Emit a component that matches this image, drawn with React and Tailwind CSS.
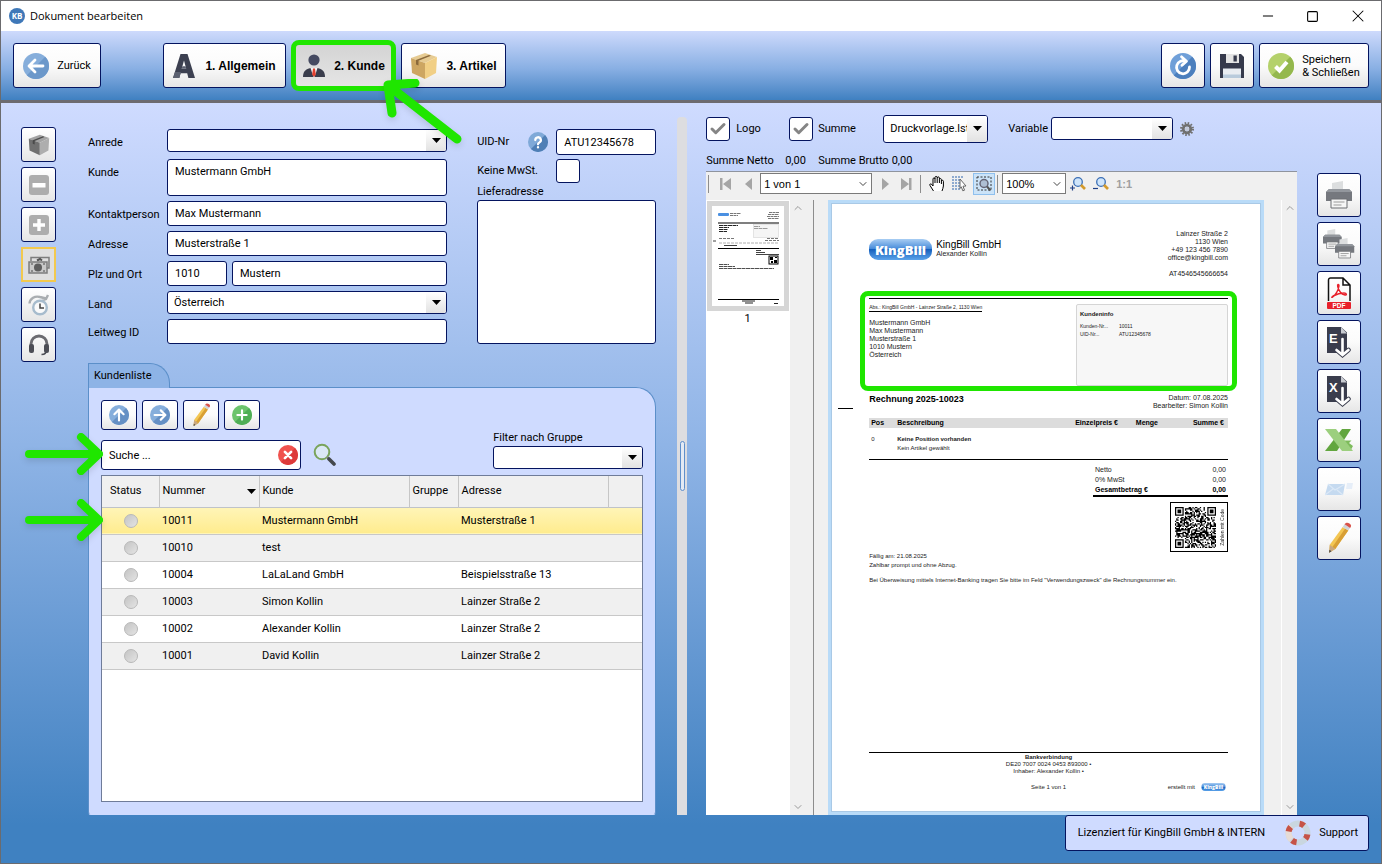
import { useState } from "react";
import { Check, ChevronDown, ChevronUp, Minus, Square, X } from "lucide-react";
import clsx from "clsx";

const customers = [
  { nummer: "10011", kunde: "Mustermann GmbH", gruppe: "", adresse: "Musterstraße 1" },
  { nummer: "10010", kunde: "test", gruppe: "", adresse: "" },
  { nummer: "10004", kunde: "LaLaLand GmbH", gruppe: "", adresse: "Beispielsstraße 13" },
  { nummer: "10003", kunde: "Simon Kollin", gruppe: "", adresse: "Lainzer Straße 2" },
  { nummer: "10002", kunde: "Alexander Kollin", gruppe: "", adresse: "Lainzer Straße 2" },
  { nummer: "10001", kunde: "David Kollin", gruppe: "", adresse: "Lainzer Straße 2" },
];

const box = "w-full min-w-0 rounded-[3px] border border-[#04145f] bg-white text-black outline-none";
const field = `${box} px-[7px]`;
const button =
  "flex items-center justify-center rounded-[3px] border border-[#04145f] bg-linear-to-b from-white via-[#fbfbfb] to-[#e6e6e6] cursor-pointer";

/* ---------- icons ---------- */

const RoundIcon = ({ size, from, to, children }) => (
  <svg width={size} height={size} viewBox="0 0 26 26" fill="none" aria-hidden="true">
    <circle cx="13" cy="13" r="13" fill={from} />
    <path d="M22.2 3.8A13 13 0 0 1 3.8 22.2z" fill={to} />
    <g stroke="#fff" strokeWidth="2.8" strokeLinecap="round" strokeLinejoin="round">
      {children}
    </g>
  </svg>
);

const BackIcon = () => (
  <RoundIcon size={26} from="#86aedb" to="#6c98ca">
    <path d="M20 13H6.5M12 7l-6 6 6 6" />
  </RoundIcon>
);

const UpIcon = () => (
  <RoundIcon size={20} from="#86aedb" to="#6590c4">
    <path d="M13 20V6.500M7 12l6-6 6 6" />
  </RoundIcon>
);

const RightIcon = () => (
  <RoundIcon size={20} from="#86aedb" to="#6590c4">
    <path d="M6 13h13.500M14 7l6 6-6 6" />
  </RoundIcon>
);

const AddIcon = () => (
  <RoundIcon size={20} from="#6cc46c" to="#4fae55">
    <path d="M13 7v12M7 13h12" />
  </RoundIcon>
);

const ClearIcon = () => (
  <RoundIcon size={20} from="#f0524e" to="#dd3a3a">
    <path d="M9 9l8 8M17 9l-8 8" strokeWidth="3.500" />
  </RoundIcon>
);

const ReloadIcon = () => (
  <RoundIcon size={26} from="#6f9fd8" to="#4c7fbd">
    <path d="M16 8.500A6.500 6.500 0 1 0 19.500 14M11.500 3.800l5 4.400-4.500 4" />
  </RoundIcon>
);

const OkIcon = () => (
  <RoundIcon size={26} from="#b4d16b" to="#94b84d">
    <path d="M7.500 13.500l4 4 7.500-8.500" strokeWidth="4" strokeLinecap="butt" strokeLinejoin="miter" />
  </RoundIcon>
);

const HelpIcon = () => (
  <RoundIcon size={20} from="#7fa9d8" to="#4f7fb6">
    <path d="M9.500 10.500a3.600 3.600 0 1 1 5.200 3.200c-1.300.7-1.700 1.200-1.700 2.300M13 19.800v.2" strokeWidth="3" />
  </RoundIcon>
);

const LetterIcon = () => (
  <svg width="22" height="24" viewBox="0 0 22 24" aria-hidden="true">
    <path d="M7.500 0h7L22 24h-6.600l-1.200-4.800H7.600L6.300 24H0zM11 6.500L8.700 14.800h4.500z" fill="#3c4050" fillRule="evenodd" />
    <path d="M0 24l2-6h5.900l-.3 1.200L6.300 24zM8.700 14.800l.7-2.600h3.200l.6 2.600z" fill="#5b6070" />
  </svg>
);

const PersonIcon = () => (
  <svg width="24" height="24" viewBox="0 0 24 24" aria-hidden="true">
    <circle cx="12" cy="6" r="5.600" fill="#454a61" />
    <path d="M1 23c0-6 3-8 7.500-9h7c4.500 1 7.500 3 7.500 9z" fill="#3a3d4c" />
    <path d="M8.500 14h7L12.500 23h-1z" fill="#f3f3f3" />
    <path d="M11 14.500h2l.8 6-1.800 2.500-1.800-2.500z" fill="#e2402f" />
  </svg>
);

const BoxIcon = ({ gray, size }) => (
  <svg width={size} height={size} viewBox="0 0 28 28" aria-hidden="true">
    <path d="M1 6l14-5 12 4-12 6z" fill={gray ? "#a3a3a3" : "#e6cb93"} />
    <path d="M1 6l14 5v16L2 21z" fill={gray ? "#707070" : "#cda662"} />
    <path d="M15 11l12-6-1 16-11 6z" fill={gray ? "#aeaeae" : "#f1cf85"} />
    <path d="M6 8l13-5 2 .7L8.500 8.800v4.700L6 12.500z" fill={gray ? "#4a4a4a" : "#8b6a3c"} />
  </svg>
);

const DiskIcon = () => (
  <svg width="24" height="24" viewBox="0 0 24 24" aria-hidden="true">
    <path d="M0 0h21l3 3v21H0z" fill="#363a4c" />
    <path d="M6 0h13v9H6z" fill="#e4e4e4" />
    <path d="M13.500 1.500h3.300v6h-3.300z" fill="#363a4c" />
    <path d="M3 14.500h18V24H3z" fill="#e9edf2" />
    <path d="M3 20.500h18V24H3z" fill="#b9cbdc" />
  </svg>
);

const SignIcon = ({ plus }) => (
  <svg width="20" height="20" viewBox="0 0 20 20" aria-hidden="true">
    <rect width="20" height="20" rx="3" fill="#adadad" />
    <path d={plus ? "M8.300 4h3.400v4.300H16v3.400h-4.300V16H8.300v-4.300H4V8.300h4.300z" : "M3.500 8h13v4.500h-13z"} fill="#fff" />
  </svg>
);

const MoneyIcon = () => (
  <svg width="22" height="18" viewBox="0 0 22 18" fill="none" aria-hidden="true">
    <path d="M3 5V1.500h18V12h-2" stroke="#7d7d7d" strokeWidth="1.500" />
    <path d="M9 4.500l3-1.500 2 1.500" stroke="#555" strokeWidth="2" />
    <rect x="1" y="6" width="18" height="11" fill="#c9c9c9" stroke="#7d7d7d" strokeWidth="1.500" />
    <circle cx="10" cy="11.500" r="4" fill="#5e5e5e" />
    <path d="M3 8h2M3 15h2M15 8h2M15 15h2" stroke="#777" strokeWidth="1.500" />
  </svg>
);

const ClockIcon = () => (
  <svg width="22" height="22" viewBox="0 0 22 22" fill="none" aria-hidden="true">
    <path d="M1.500 9.500C2 4.500 7 1.500 12 3l6 1.500M20 1l-2 4-4 1.500" stroke="#a9adb0" strokeWidth="2.400" />
    <circle cx="12" cy="13.500" r="6.800" fill="#fafafa" stroke="#a7bccd" strokeWidth="2.400" />
    <path d="M12 9.500V14h4" stroke="#444" strokeWidth="1.500" />
  </svg>
);

const HeadsetIcon = () => (
  <svg width="22" height="22" viewBox="0 0 22 22" fill="none" aria-hidden="true">
    <path d="M3 13V10a8 8 0 0 1 16 0v3" stroke="#6b6b70" strokeWidth="2.800" />
    <path d="M18.500 16c0 3-2 4.500-5 4.500" stroke="#4c4d55" strokeWidth="1.500" />
    <rect x="1" y="10" width="5" height="9" rx="2" fill="#4c4d55" />
    <rect x="16" y="10" width="5" height="9" rx="2" fill="#4c4d55" />
  </svg>
);

const PencilIcon = ({ size }) => (
  <svg width={size} height={size} viewBox="0 0 26 26" aria-hidden="true">
    <path d="M5 25l.5-6.500L16 4l4.500 3L10 22z" fill="#f3c653" />
    <path d="M7.500 20.500L18 5.300 20.500 7 10 22z" fill="#d89f35" />
    <path d="M16 4l1.500-2.200L22 4.800 20.500 7z" fill="#cfd3d8" />
    <path d="M17.500 1.800C18.500.4 20 .2 21.500 1.200s1.800 2.300.5 3.600z" fill="#d9534a" />
    <path d="M5 25l.5-6.500L10 22z" fill="#c9a77f" />
    <path d="M5 25l.2-2.500 1.700 1.200z" fill="#444" />
  </svg>
);

const SearchIcon = () => (
  <svg width="23" height="24" viewBox="0 0 23 24" fill="none" aria-hidden="true">
    <circle cx="9" cy="9" r="7.300" fill="#dbe8f6" stroke="#7aa45c" strokeWidth="2" />
    <path d="M14 14l2 2" stroke="#888" strokeWidth="2" />
    <path d="M16 16l5 5" stroke="#44484d" strokeWidth="3.600" strokeLinecap="round" />
  </svg>
);

const GearIcon = () => (
  <svg width="14" height="14" viewBox="0 0 14 14" fill="none" aria-hidden="true">
    <circle cx="7" cy="7" r="6" stroke="#70706f" strokeWidth="2" strokeDasharray="1.570 1.570" />
    <circle cx="7" cy="7" r="3.800" stroke="#70706f" strokeWidth="2.800" />
    <circle cx="7" cy="7" r="2" fill="#c3c9d6" />
  </svg>
);

const PrinterShape = () => (
  <>
    <path d="M6 9V2l11-2v9z" fill="#dcdedf" />
    <path d="M3 8h20l3 3v9H0v-9z" fill="#75787e" />
    <path d="M3 8h20l3 3H0z" fill="#93979d" />
    <path d="M5 18h16v9H5z" fill="#f6f6f6" stroke="#6c6e72" />
    <path d="M7.500 21h11M7.500 24h8" stroke="#9a9a9a" strokeWidth="1.200" />
  </>
);

const PrinterIcon = () => (
  <svg width="26" height="28" viewBox="0 0 26 28" aria-hidden="true">
    <PrinterShape />
  </svg>
);

const PrintersIcon = () => (
  <svg width="32" height="30" viewBox="0 0 32 30" aria-hidden="true">
    <g transform="scale(.72)">
      <PrinterShape />
    </g>
    <g transform="translate(12 9) scale(.74)">
      <PrinterShape />
    </g>
  </svg>
);

const PdfIcon = () => (
  <svg width="24" height="32" viewBox="0 0 24 32" fill="none" aria-hidden="true">
    <path d="M1.500 24V3A2 2 0 0 1 3.500 1H16l7 7v16M16 1v7h7" stroke="#111" strokeWidth="1.500" />
    <path d="M5.500 20c3-1.500 6-7 6.500-11 0-2.500-2-2-1.300.5C11.500 13 14 17 18 18c2 .3 2-2-1-2-4 0-8 1.500-11 3-1.800 1-1.300 2-.5 1z" stroke="#e8202a" strokeWidth="1.400" />
    <rect y="25" width="24" height="7" rx="1" fill="#e8202a" />
    <text x="12" y="31" textAnchor="middle" fontSize="6.500" fontWeight="700" fontFamily="Liberation Sans, sans-serif" fill="#fff">PDF</text>
  </svg>
);

const ExportIcon = ({ letter }) => (
  <svg width="24" height="32" viewBox="0 0 24 32" fill="none" aria-hidden="true">
    <path d="M0 1h14l6 5.500V27H0z" fill="#3a3d4d" />
    <path d="M14 1l6 6.500h-6z" fill="#c9ccd2" />
    <text x="2" y="17" fontSize="13" fontWeight="700" fontFamily="Liberation Sans, sans-serif" fill="#fff">{letter}</text>
    <path d="M15.500 13v15M9.500 24l6 5 6-5" stroke="#3a3d4d" strokeWidth="4.500" strokeLinecap="round" />
    <path d="M15.500 13v15M9.500 24l6 5 6-5" stroke="#fff" strokeWidth="2.600" strokeLinecap="round" />
  </svg>
);

const ExcelIcon = () => (
  <svg width="29" height="22" viewBox="0 0 29 22" aria-hidden="true">
    <path d="M17 0h9L12 22H0z" fill="#62a63f" />
    <path d="M19.500 11.500h7l-2.500 2.500 4 3-2 3.500-6-2z" fill="#7dbb5b" />
    <path d="M0 0h11l17 22H17z" fill="#9ccf7e" />
  </svg>
);

const MailIcon = () => (
  <svg width="29" height="14" viewBox="0 0 29 14" fill="none" aria-hidden="true">
    <path d="M3 2h17l-2 11H0z" fill="#c5daf0" />
    <path d="M3 2l7 6 10-6M0 13l8-6M18 13l-6-5" stroke="#dbe8f6" strokeWidth="1.200" />
    <path d="M22 1h6l-1 6h-6z" fill="#e6eef8" />
  </svg>
);

const LifebuoyIcon = () => (
  <svg width="26" height="26" viewBox="0 0 26 26" fill="none" aria-hidden="true">
    <circle cx="13" cy="13" r="9.500" stroke="#c9d6df" strokeWidth="6" />
    <path d="M6.300 6.300a9.500 9.500 0 0 0 0 13.400" stroke="#e6dcd6" strokeWidth="6" />
    <circle cx="13" cy="13" r="9.500" stroke="#c65347" strokeWidth="6" strokeDasharray="5 9.920" transform="rotate(8 13 13)" />
  </svg>
);

const KingBillLogo = ({ className }) => (
  <svg viewBox="0 0 63 21" className={className} role="img" aria-label="KingBill">
    <defs>
      <linearGradient id="kb" x1="0" y1="0" x2="0" y2="1">
        <stop offset="0" stopColor="#a8cdf3" />
        <stop offset="0.45" stopColor="#4b8edb" />
        <stop offset="0.5" stopColor="#1560bd" />
        <stop offset="1" stopColor="#5ba3ea" />
      </linearGradient>
    </defs>
    <rect width="63" height="21" rx="9" fill="url(#kb)" />
    <text x="31.500" y="15.500" textAnchor="middle" fontSize="13" fontWeight="800" fontFamily="Open Sans, sans-serif" fill="#fff">KingBill</text>
  </svg>
);

/* ---------- form parts ---------- */

const Caret = () => (
  <svg width="9" height="5" viewBox="0 0 9 5" aria-hidden="true">
    <path d="M0 0h9L4.500 5z" fill="#000" />
  </svg>
);

const Select = ({ id, value = "", label, className }) => (
  <div className={clsx("relative", className)}>
    <select id={id} aria-label={label} className={clsx(box, "block h-full appearance-none pl-1.5")}>
      <option>{value}</option>
    </select>
    <span className="pointer-events-none absolute inset-y-px right-px flex w-5 items-center justify-center rounded-r-[2px] bg-linear-to-b from-white to-[#e2e2e2]">
      <Caret />
    </span>
  </div>
);

const Checkbox = ({ id, defaultChecked = false }) => {
  const [checked, setChecked] = useState(defaultChecked);
  return (
    <span className="relative size-6 shrink-0">
      <input
        id={id}
        type="checkbox"
        checked={checked}
        onChange={() => setChecked(!checked)}
        className="block size-6 appearance-none rounded-[3px] border border-[#04145f] bg-white"
      />
      {checked && (
        <Check className="pointer-events-none absolute inset-0 m-auto size-4.5 text-[#858585]" strokeWidth={4} />
      )}
    </span>
  );
};

const Row = ({ label, htmlFor, className, children }) => (
  <div className={clsx("flex", className)}>
    <label htmlFor={htmlFor} className="w-[79px] shrink-0 pt-1.5 leading-4">
      {label}
    </label>
    {children}
  </div>
);

const PointerArrow = ({ className }) => (
  <svg
    width="84"
    height="44"
    viewBox="0 0 84 44"
    fill="none"
    aria-hidden="true"
    className={clsx("pointer-events-none absolute z-10 drop-shadow-md", className)}
  >
    <path d="M9 22h69M61 5l18 17-18 17" stroke="#1fe600" strokeWidth="8" strokeLinecap="round" strokeLinejoin="round" />
  </svg>
);

/* ---------- window parts ---------- */

const TitleBar = () => (
  <div className="flex h-[30px] items-center bg-white pl-2 font-['Open_Sans',sans-serif] text-[11px] text-black">
    <svg width="16" height="16" viewBox="0 0 16 16" aria-hidden="true">
      <circle cx="8" cy="8" r="8" fill="#3f78b8" />
      <text x="8" y="11" textAnchor="middle" fontSize="8" fontWeight="700" fill="#fff">KB</text>
    </svg>
    <h1 className="ml-[5px] flex-1">Dokument bearbeiten</h1>
    <button type="button" aria-label="Minimieren" className="flex h-full w-[45px] items-center justify-center">
      <Minus size={16} strokeWidth={1.500} />
    </button>
    <button type="button" aria-label="Maximieren" className="flex h-full w-[45px] items-center justify-center">
      <Square size={13} strokeWidth={2} />
    </button>
    <button type="button" aria-label="Fenster schließen" className="flex h-full w-[46px] items-center justify-center">
      <X size={20} strokeWidth={1.250} />
    </button>
  </div>
);

const Header = () => (
  <header className="flex h-[72px] items-start border-b-[3px] border-[#6d6b70] bg-linear-to-b from-[#cedafc] via-[#88afe3] via-55% to-[#3f80c1] px-3 pt-3">
    <button type="button" className={clsx(button, "h-[45px] w-[88px] gap-2")}>
      <BackIcon />
      Zurück
    </button>
    <nav className="ml-[62px] flex gap-[5px] font-['Liberation_Sans',sans-serif] text-xs font-bold">
      <button type="button" className={clsx(button, "h-[45px] w-[123px] gap-2.5")}>
        <LetterIcon />
        1. Allgemein
      </button>
      <div className="relative">
        <button
          type="button"
          className="flex h-[45px] w-[105px] items-center justify-center gap-2 rounded-lg bg-linear-to-b from-[#d3d3d3] to-[#e6e6e6]"
        >
          <PersonIcon />
          2. Kunde
        </button>
        <span className="pointer-events-none absolute inset-x-0 -inset-y-[3px] rounded-lg border-[5px] border-[#1fe600]" />
        <svg
          width="82"
          height="68"
          viewBox="0 0 82 68"
          fill="none"
          aria-hidden="true"
          className="pointer-events-none absolute top-9 left-[91px] z-20 drop-shadow-md"
        >
          <path d="M75 60L7 7M33 4L6 6l4 28" stroke="#1fe600" strokeWidth="9" strokeLinecap="round" strokeLinejoin="round" />
        </svg>
      </div>
      <button type="button" className={clsx(button, "h-[45px] w-[105px] gap-2")}>
        <BoxIcon size={28} />
        3. Artikel
      </button>
    </nav>
    <div className="ml-auto flex gap-[5px]">
      <button type="button" aria-label="Aktualisieren" className={clsx(button, "h-[45px] w-11")}>
        <ReloadIcon />
      </button>
      <button type="button" aria-label="Speichern" className={clsx(button, "h-[45px] w-11")}>
        <DiskIcon />
      </button>
      <button type="button" className={clsx(button, "h-[45px] w-[110px] gap-2 text-left leading-[13px]")}>
        <OkIcon />
        <span>
          Speichern
          <br />
          &amp; Schließen
        </span>
      </button>
    </div>
  </header>
);

const sideTools = [
  { name: "Artikel", icon: <BoxIcon gray size={22} /> },
  { name: "Entfernen", icon: <SignIcon /> },
  { name: "Hinzufügen", icon: <SignIcon plus /> },
  { name: "Zahlung", icon: <MoneyIcon />, active: true },
  { name: "Verlauf", icon: <ClockIcon /> },
  { name: "Hotline", icon: <HeadsetIcon /> },
];

const SideTools = () => (
  <aside className="flex w-[35px] shrink-0 flex-col gap-[5px] pt-6">
    {sideTools.map((tool) => (
      <button
        key={tool.name}
        type="button"
        aria-label={tool.name}
        className={clsx(
          "flex size-[35px] items-center justify-center",
          tool.active
            ? "border-2 border-[#f2c94f] bg-[#dfdfdf]"
            : "rounded-[3px] border border-[#04145f] bg-linear-to-b from-white to-[#e6e6e6]"
        )}
      >
        {tool.icon}
      </button>
    ))}
  </aside>
);

const CustomerForm = () => (
  <form className="flex gap-[30px]">
    <div className="flex min-w-0 flex-1 flex-col gap-[5px]">
      <Row label="Anrede" htmlFor="anrede" className="h-[25px]">
        <Select id="anrede" className="h-[23px] flex-1" />
      </Row>
      <Row label="Kunde" htmlFor="kunde">
        <textarea id="kunde" defaultValue="Mustermann GmbH" className={clsx(field, "h-[37px] resize-none pt-1 leading-4")} />
      </Row>
      <Row label="Kontaktperson" htmlFor="kontakt">
        <input id="kontakt" defaultValue="Max Mustermann" className={clsx(field, "h-[25px]")} />
      </Row>
      <Row label="Adresse" htmlFor="adresse">
        <input id="adresse" defaultValue="Musterstraße 1" className={clsx(field, "h-[25px]")} />
      </Row>
      <Row label="Plz und Ort" htmlFor="plz">
        <div className="flex flex-1 gap-[5px]">
          <input id="plz" defaultValue="1010" className={clsx(field, "h-[25px] max-w-[60px]")} />
          <input aria-label="Ort" defaultValue="Mustern" className={clsx(field, "h-[25px]")} />
        </div>
      </Row>
      <Row label="Land" htmlFor="land">
        <Select id="land" value="Österreich" className="h-[23px] flex-1" />
      </Row>
      <Row label="Leitweg ID" htmlFor="leitweg">
        <input id="leitweg" className={clsx(field, "h-[25px]")} />
      </Row>
    </div>
    <div className="flex w-[179px] shrink-0 flex-col">
      <div className="flex items-center">
        <label htmlFor="uid" className="w-[51px]">UID-Nr</label>
        <HelpIcon />
        <input id="uid" defaultValue="ATU12345678" className={clsx(field, "ml-2 h-[26px] flex-1")} />
      </div>
      <div className="mt-1 flex items-center">
        <label htmlFor="mwst" className="w-[79px]">Keine MwSt.</label>
        <Checkbox id="mwst" />
      </div>
      <label htmlFor="liefer" className="leading-[17px]">Lieferadresse</label>
      <textarea id="liefer" className={clsx(field, "flex-1 resize-none")} />
    </div>
  </form>
);

const CustomerList = () => {
  const [selected, setSelected] = useState("10011");
  const [search, setSearch] = useState("Suche ...");

  return (
    <section className="mt-[19px] flex flex-1 flex-col">
      <h2 className="relative z-1 -mb-px flex h-[25px] w-[82px] items-center rounded-tr-[20px] border border-b-0 border-[#5b8fc9] bg-[#8db3e6] pl-[5px]">
        Kundenliste
      </h2>
      <div className="flex flex-1 flex-col rounded-tr-[20px] rounded-b-[3px] border border-[#5b8fc9] border-b-[#cfdbff] bg-[#cfdbff] p-3">
        <div className="flex gap-[5px]">
          <button type="button" aria-label="Nach oben" className={clsx(button, "h-[30px] w-9")}>
            <UpIcon />
          </button>
          <button type="button" aria-label="Übernehmen" className={clsx(button, "h-[30px] w-9")}>
            <RightIcon />
          </button>
          <button type="button" aria-label="Kunde bearbeiten" className={clsx(button, "h-[30px] w-9")}>
            <PencilIcon size={24} />
          </button>
          <button type="button" aria-label="Neuer Kunde" className={clsx(button, "h-[30px] w-9")}>
            <AddIcon />
          </button>
        </div>
        <div className="flex items-end">
          <div className="relative mb-[3px] w-[200px]">
            <input
              aria-label="Suche"
              value={search}
              onChange={(e) => setSearch(e.target.value)}
              className={clsx(field, "block h-[30px]")}
            />
            <button
              type="button"
              aria-label="Suche leeren"
              onClick={() => setSearch("")}
              className="absolute inset-y-0 right-[3px] flex items-center"
            >
              <ClearIcon />
            </button>
            <PointerArrow className="-top-2 right-[calc(100%-3px)]" />
          </div>
          <button type="button" aria-label="Suchen" className="ml-3 pb-1.5">
            <SearchIcon />
          </button>
          <div className="ml-auto w-[150px]">
            <label htmlFor="filter" className="block leading-4">Filter nach Gruppe</label>
            <Select id="filter" className="mb-1 h-[23px]" />
          </div>
        </div>
        <div className="mt-0.5 flex-1 border border-[#6f7c99] bg-white">
          <table className="w-full table-fixed border-collapse text-left">
            <thead>
              <tr className="h-[31px] border-b border-[#bfc3c9] bg-[#f0f0f0]">
                <th className="w-[57px] pl-2 font-normal">Status</th>
                <th className="w-[100px] border-l border-[#c6c6c6] px-[3px] font-normal">
                  <span className="flex items-center justify-between">
                    Nummer
                    <Caret />
                  </span>
                </th>
                <th className="w-[150px] border-l border-[#c6c6c6] pl-[3px] font-normal">Kunde</th>
                <th className="w-[49px] border-l border-[#c6c6c6] pl-[3px] font-normal">Gruppe</th>
                <th className="w-[150px] border-l border-[#c6c6c6] pl-[3px] font-normal">Adresse</th>
                <th className="border-l border-[#c6c6c6]" />
              </tr>
            </thead>
            <tbody>
              {customers.map((c, index) => (
                <tr
                  key={c.nummer}
                  onClick={() => setSelected(c.nummer)}
                  className={clsx(
                    "h-[27px] border-b border-[#c8c8c8]",
                    selected === c.nummer
                      ? "bg-linear-to-b from-[#fff5b8] to-[#ffec8e]"
                      : index % 2 === 1
                        ? "bg-[#f0f0f0]"
                        : "bg-white"
                  )}
                >
                  <td className="relative">
                    {index === 0 && <PointerArrow className="-top-2.5 right-[calc(100%-2px)]" />}
                    <span className="mx-auto block size-3.5 rounded-full border border-[#b9b9b9] bg-linear-to-br from-[#c4c4c4] to-[#e4e4e4]" />
                  </td>
                  <td className="pl-[3px]">{c.nummer}</td>
                  <td className="pl-[3px]">{c.kunde}</td>
                  <td className="pl-[3px]">{c.gruppe}</td>
                  <td className="pl-[3px]">{c.adresse}</td>
                  <td />
                </tr>
              ))}
            </tbody>
          </table>
        </div>
      </div>
    </section>
  );
};

/* ---------- print preview ---------- */

const QR_SIZE = 33;

const finderAt = (x, y) => {
  const corners = [
    [0, 0],
    [QR_SIZE - 7, 0],
    [0, QR_SIZE - 7],
  ];
  for (const [cx, cy] of corners) {
    const dx = x - cx;
    const dy = y - cy;
    if (dx >= -1 && dx <= 7 && dy >= -1 && dy <= 7) {
      const ring = Math.max(Math.abs(dx - 3), Math.abs(dy - 3));
      return ring === 3 || ring <= 1;
    }
  }
  return null;
};

const qrPath = () => {
  let seed = 7;
  let path = "";
  for (let y = 0; y < QR_SIZE; y++) {
    for (let x = 0; x < QR_SIZE; x++) {
      seed = (seed * 16807) % 2147483647;
      const finder = finderAt(x, y);
      const on = finder === null ? seed % 100 < 52 : finder;
      if (on) path += `M${x} ${y}h1v1h-1z`;
    }
  }
  return path;
};

const QrCode = () => (
  <svg width="41" height="41" viewBox={`0 0 ${QR_SIZE} ${QR_SIZE}`} role="img" aria-label="QR-Code">
    <path d={qrPath()} fill="#000" />
  </svg>
);

const Thumbnail = () => (
  <svg width="72" height="100" viewBox="0 0 72 100" aria-hidden="true">
    <rect width="72" height="100" fill="#fff" />
    <rect x="6" y="7" width="11" height="3" rx="1" fill="#4a90e2" />
    <path d="M18 7.500h11M18 9.500h8M57 6.500h10M56 8.500h11M55 10.500h12M56 12.500h11" stroke="#555" strokeWidth=".8" strokeDasharray="3 .5" />
    <path d="M6 17h61M6 42.500h61M6 93.500h61" stroke="#000" strokeWidth="1.200" />
    <path d="M7 19.500h19M7 21.500h10M7 23.500h9M7 25.500h8M42 20.500h6M42 22.500h14" stroke="#222" strokeDasharray="4 .5" />
    <rect x="41.500" y="18.500" width="25" height="13" fill="#eee" fillOpacity=".6" stroke="#ccc" strokeWidth=".5" />
    <path d="M7 32.500h15M55 32.500h12M53 34.500h14" stroke="#555" strokeWidth=".8" strokeDasharray="3 1" />
    <path d="M7 37h60" stroke="#999" strokeDasharray="3 1" strokeWidth=".8" />
    <path d="M12 39.500h13M44 44.500h5M44 46.500h9M44 48.500h23M1 35h3" stroke="#111" strokeWidth=".8" />
    <rect x="57" y="50" width="9" height="8" fill="#fff" stroke="#000" />
    <path d="M58 51h3v3h-3zM62 54h3v3h-3zM59 55h2v2h-2zM63 51h2v1h-2z" fill="#000" />
    <path d="M7 58.500h10M7 60.500h16M7 62.500h55" stroke="#222" strokeWidth=".8" strokeDasharray="4 .5" />
    <path d="M30 95h13M33 97h8M62 97.500h4" stroke="#222" />
  </svg>
);

const DocumentPage = () => (
  <article className="flex flex-1 flex-col border border-[#a9c9e6] bg-white pt-[26px] pr-8 pb-5 pl-[37px] font-['Liberation_Sans',sans-serif] text-[7px] leading-[8px] text-[#222]">
    <div className="flex">
      <KingBillLogo className="mt-[9px] h-[21px] w-[63px]" />
      <div className="mt-[9px] ml-1">
        <p className="text-[10px] leading-[11px] text-black">KingBill GmbH</p>
        <p>Alexander Kollin</p>
      </div>
      <address className="ml-auto text-right not-italic">
        Lainzer Straße 2<br />
        1130 Wien
        <br />
        +49 123 456 7890
        <br />
        office@kingbill.com
        <br />
        <br />
        AT4546545666654
      </address>
    </div>

    <div className="relative mt-5 flex h-[88px] justify-between border-t border-black">
      <div className="pt-[5px]">
        <p className="border-b border-black text-[5px] leading-[7px]">
          Abs.: KingBill GmbH - Lainzer Straße 2, 1130 Wien
        </p>
        <p className="mt-[7px]">
          Mustermann GmbH
          <br />
          Max Mustermann
          <br />
          Musterstraße 1<br />
          1010 Mustern
          <br />
          Österreich
        </p>
      </div>
      <div className="mt-[5px] w-[152px] rounded-[2px] border border-[#d5d5d5] bg-[#f7f7f7] px-[3px] pt-[5px] text-[5px]">
        <p className="text-[6px] font-bold">Kundeninfo</p>
        <dl className="mt-1 grid grid-cols-[39px_1fr]">
          <dt>Kunden-Nr...</dt>
          <dd>10011</dd>
          <dt>UID-Nr...</dt>
          <dd>ATU12345678</dd>
        </dl>
      </div>
      <span className="pointer-events-none absolute -inset-x-[9px] -top-2 -bottom-[5px] rounded-lg border-[5px] border-[#1fe600]" />
    </div>

    <div className="relative mt-2 flex justify-between">
      <h3 className="text-[9px] leading-[10px] font-bold text-black">Rechnung 2025-10023</h3>
      <p className="text-right">
        Datum: 07.08.2025
        <br />
        Bearbeiter: Simon Kollin
      </p>
      <span className="absolute top-[14px] -left-[31px] h-px w-[15px] bg-black" />
    </div>

    <table className="mt-2 w-full border-b border-black text-left text-[6px]">
      <thead>
        <tr className="h-2.5 bg-[#dcdcdc] text-[7px] text-black">
          <th className="w-7 pl-0.5">Pos</th>
          <th>Beschreibung</th>
          <th className="w-[70px] pr-1 text-right whitespace-nowrap">Einzelpreis €</th>
          <th className="w-10 pr-1 text-right">Menge</th>
          <th className="w-[66px] pr-1 text-right">Summe €</th>
        </tr>
      </thead>
      <tbody>
        <tr className="align-top">
          <td className="pt-[7px] pl-0.5">0</td>
          <td className="pt-[7px] pb-1.5 leading-[9px]" colSpan={4}>
            <b>Keine Position vorhanden</b>
            <br />
            Kein Artikel gewählt
          </td>
        </tr>
      </tbody>
    </table>

    <table className="mt-[5px] ml-auto w-[135px] border-b-2 border-black leading-[10px]">
      <tbody>
        <tr>
          <th scope="row" className="pl-0.5 text-left font-normal">Netto</th>
          <td className="pr-0.5 text-right">0,00</td>
        </tr>
        <tr>
          <th scope="row" className="pl-0.5 text-left font-normal">0% MwSt</th>
          <td className="pr-0.5 text-right">0,00</td>
        </tr>
        <tr className="font-bold text-black">
          <th scope="row" className="pl-0.5 text-left">Gesamtbetrag €</th>
          <td className="pr-0.5 text-right">0,00</td>
        </tr>
      </tbody>
    </table>

    <div className="mt-[5px] ml-auto flex h-[50px] w-[58px] items-center justify-between border border-black pr-0.5 pl-1">
      <QrCode />
      <span className="rotate-180 text-[5px] leading-[6px] [writing-mode:vertical-rl]">Zahlen mit Code</span>
    </div>

    <div className="text-[6px]">
      <p className="leading-[9px]">
        Fällig am: 21.08.2025
        <br />
        Zahlbar prompt und ohne Abzug.
      </p>
      <p className="mt-1.5">
        Bei Überweisung mittels Internet-Banking tragen Sie bitte im Feld "Verwendungszweck" die Rechnungsnummer ein.
      </p>
    </div>

    <footer className="mt-auto border-t border-black text-center text-[6px] leading-[7px]">
      <p className="pt-px">
        <b>Bankverbindung</b>
        <br />
        DE20 7007 0024 0453 893000 •
        <br />
        Inhaber: Alexander Kollin •
      </p>
      <div className="mt-2 grid grid-cols-3 items-center">
        <span className="col-start-2">Seite 1 von 1</span>
        <span className="flex items-center justify-end gap-1">
          erstellt mit
          <KingBillLogo className="h-2 w-[29px]" />
        </span>
      </div>
    </footer>
  </article>
);

const ScrollBar = () => (
  <div className="flex w-4 shrink-0 flex-col items-center justify-between border-l border-white bg-[#f0f0f0] py-0.5 text-[#9a9a9a]">
    <ChevronUp size={12} />
    <ChevronDown size={12} />
  </div>
);

const ViewerSelect = ({ label, value, className }) => (
  <div className={clsx("relative h-[21px]", className)}>
    <select aria-label={label} className="block h-full w-full appearance-none border border-[#7a7a7a] bg-white pl-[3px] text-black">
      <option>{value}</option>
    </select>
    <ChevronDown size={12} className="pointer-events-none absolute inset-y-0 right-[3px] my-auto text-[#444]" />
  </div>
);

const PageNavIcon = ({ d }) => (
  <svg width="12" height="12" viewBox="0 0 12 12" fill="#a5a5a5" aria-hidden="true">
    <path d={d} />
  </svg>
);

const ZoomIcon = ({ plus }) => (
  <svg width="16" height="16" viewBox="0 0 16 16" fill="none" aria-hidden="true">
    <circle cx="8" cy="6" r="4.300" fill="#cfe5fb" stroke="#3b6fb6" strokeWidth="1.300" />
    <path d="M11 9l4 4" stroke="#d39a2c" strokeWidth="2.600" />
    <path d={plus ? "M0 12h5M2.500 9.500v5" : "M0 12.500h5"} stroke="#1f3f86" strokeWidth="1.200" />
  </svg>
);

const Separator = () => <span className="h-[18px] w-px bg-[#8d8d8d]" />;

const ViewerToolbar = () => (
  <div className="flex h-[23px] items-center bg-[#f0f0f0] pl-0.5 font-['Liberation_Sans',sans-serif] text-[11px]">
    <Separator />
    <button type="button" aria-label="Erste Seite" className="ml-[11px]">
      <PageNavIcon d="M0 0h2.500v12H0zM11 0v12L3 6z" />
    </button>
    <button type="button" aria-label="Vorherige Seite" className="ml-3">
      <PageNavIcon d="M8 0v12L1 6z" />
    </button>
    <ViewerSelect label="Seite" value="1 von 1" className="ml-1 w-[112px]" />
    <button type="button" aria-label="Nächste Seite" className="ml-2">
      <PageNavIcon d="M2 0v12l7-6z" />
    </button>
    <button type="button" aria-label="Letzte Seite" className="ml-2">
      <PageNavIcon d="M9 0h2.500v12H9zM1 0v12l8-6z" />
    </button>
    <span className="ml-2 flex items-center">
      <Separator />
    </span>
    <button type="button" aria-label="Hand" className="ml-2">
      <svg width="16" height="17" viewBox="0 0 16 17" fill="#fff" stroke="#000" aria-hidden="true">
        <path d="M4.500 16L1 10.500C.2 9 1.800 8.300 2.800 9.500L4 11V4c0-1.500 2-1.500 2 0V2.500c0-1.500 2.200-1.500 2.200 0V3c0-1.500 2.200-1.500 2.200 0v1.500c0-1.200 2-1.200 2 0V6c.3-1 2-1 2 .3V11c0 2-1 3-1.400 5M6 4v4M8.200 3v5M10.400 4.500V8M12.400 6v3" />
      </svg>
    </button>
    <button type="button" aria-label="Text markieren" className="ml-[7px]">
      <svg width="16" height="16" viewBox="0 0 16 16" fill="none" aria-hidden="true">
        <path d="M0 1h12M0 4h9M0 7h8M0 10h8M0 13h8" stroke="#6e93c4" strokeDasharray="2 1" strokeWidth="1.500" />
        <path d="M8 3l6 7-3 .2 1.500 4-1.700.6-1.500-4L8 12.500z" fill="#fff" stroke="#666" />
      </svg>
    </button>
    <button
      type="button"
      aria-label="Bereich zoomen"
      className="ml-[5px] flex size-[22px] items-center justify-center border border-[#8fc0ee] bg-[#cbe3f8]"
    >
      <svg width="16" height="16" viewBox="0 0 16 16" fill="none" aria-hidden="true">
        <rect x="1" y="1" width="14" height="13" stroke="#333" strokeDasharray="2 1.500" />
        <circle cx="8" cy="7.500" r="4" fill="#aebfd4" stroke="#667" strokeWidth="1.500" />
        <path d="M11 10.500l3.500 4" stroke="#555" strokeWidth="2" />
      </svg>
    </button>
    <span className="mx-0.5 flex items-center">
      <Separator />
    </span>
    <ViewerSelect label="Zoom" value="100%" className="ml-0.5 w-16" />
    <button type="button" aria-label="Vergrößern" className="ml-1">
      <ZoomIcon plus />
    </button>
    <button type="button" aria-label="Verkleinern" className="ml-[7px]">
      <ZoomIcon />
    </button>
    <button type="button" className="ml-[7px] font-bold text-[#a0a0a0]">
      1:1
    </button>
  </div>
);

const printActions = [
  { name: "Drucken", icon: <PrinterIcon /> },
  { name: "Mehrfach drucken", icon: <PrintersIcon /> },
  { name: "PDF exportieren", icon: <PdfIcon /> },
  { name: "E-Rechnung exportieren", icon: <ExportIcon letter="E" /> },
  { name: "XML exportieren", icon: <ExportIcon letter="X" /> },
  { name: "Excel exportieren", icon: <ExcelIcon /> },
  { name: "E-Mail senden", icon: <MailIcon /> },
  { name: "Vorlage bearbeiten", icon: <PencilIcon size={32} /> },
];

const Preview = () => (
  <section className="flex min-w-0 flex-1 flex-col pr-5 pl-[19px]">
    <div className="flex h-[52px] items-center pb-px">
      <Checkbox id="logo" defaultChecked />
      <label htmlFor="logo" className="w-[59px] pl-1.5">Logo</label>
      <Checkbox id="summe" defaultChecked />
      <label htmlFor="summe" className="w-[70px] pl-[5px]">Summe</label>
      <Select label="Druckvorlage" value="Druckvorlage.lst" className="h-7 w-[105px]" />
      <label htmlFor="variable" className="w-[63px] pl-5">Variable</label>
      <Select id="variable" className="h-[23px] w-[122px]" />
      <button type="button" aria-label="Einstellungen" className="ml-[7px]">
        <GearIcon />
      </button>
    </div>
    <dl className="flex h-4 items-start leading-3 whitespace-nowrap">
      <dt className="w-[79px]">Summe Netto</dt>
      <dd className="w-[33px]">0,00</dd>
      <dt className="pr-[3px]">Summe Brutto</dt>
      <dd>0,00</dd>
    </dl>
    <div className="flex flex-1">
      <div className="flex flex-1 flex-col border-t border-[#8f949e] bg-[#f0f0f0]">
        <ViewerToolbar />
        <div className="flex flex-1 pt-[5px]">
          <div className="flex w-[83px] flex-col items-center bg-white">
            <div className="mt-px flex h-[110px] w-[82px] items-center justify-center bg-[#d6d6d6]">
              <Thumbnail />
            </div>
            <span>1</span>
          </div>
          <ScrollBar />
          <div className="ml-2 w-[15px] border-l border-[#8d8d8d]" />
          <div className="flex flex-1 border-[3px] border-[#b9dbf8]">
            <DocumentPage />
          </div>
          <div className="w-[17px]" />
          <ScrollBar />
        </div>
      </div>
      <div className="ml-5 flex flex-col gap-[5px] pt-0.5">
        {printActions.map((action) => (
          <button key={action.name} type="button" aria-label={action.name} className={clsx(button, "size-11")}>
            {action.icon}
          </button>
        ))}
      </div>
    </div>
  </section>
);

const App = () => {
  return (
    <div className="flex min-h-screen flex-col border border-[#6b6b6e] font-[Roboto,sans-serif] text-[11px] leading-4 text-black">
      <TitleBar />
      <Header />
      <div className="flex flex-1 flex-col bg-linear-to-b from-[#cfdbff] via-[#8fb4e6] via-45% to-[#3f81c1] to-95%">
        <main className="flex flex-1">
          <div className="flex w-[49%] shrink-0 gap-8 pr-[21px] pl-5">
            <SideTools />
            <div className="flex min-w-0 flex-1 flex-col pt-[26px]">
              <CustomerForm />
              <CustomerList />
            </div>
          </div>
          <div className="mt-3.5 flex w-2.5 items-center justify-center rounded-t bg-[#dddde0]">
            <span className="h-[50px] w-[5px] rounded-sm border border-[#5f8fcb] bg-[#e4eaf4]" />
          </div>
          <Preview />
        </main>
        <footer className="flex justify-end pr-3 pb-3">
          <div className="flex h-9 items-center rounded-[3px] border border-[#04145f] bg-[#cfdbff] pr-2.5 pl-3">
            <span>Lizenziert für KingBill GmbH &amp; INTERN</span>
            <a href="#support" className="ml-5 flex items-center gap-2">
              <LifebuoyIcon />
              Support
            </a>
          </div>
        </footer>
      </div>
    </div>
  );
};

export default App;
